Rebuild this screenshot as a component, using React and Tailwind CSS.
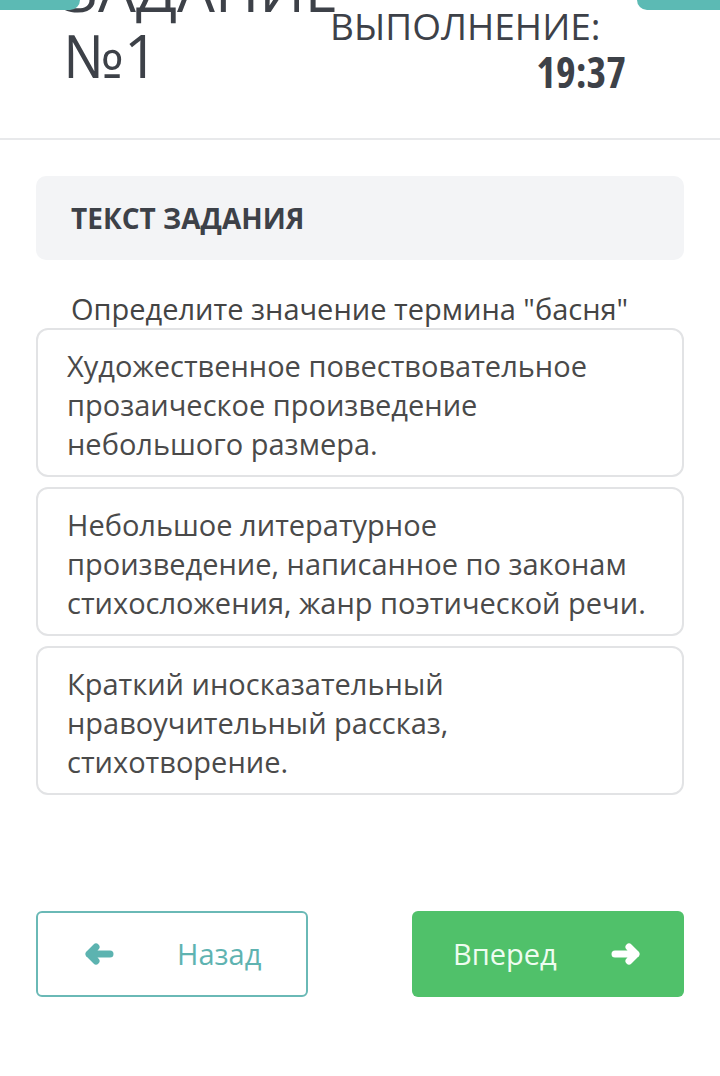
const answers = [
  'Художественное повествовательное прозаическое произведение небольшого размера.',
  'Небольшое литературное произведение, написанное по законам стихосложения, жанр поэтической речи.',
  'Краткий иносказательный нравоучительный рассказ, стихотворение.',
];

const Arrow = ({ dir, className }) => (
  <svg
    width="30"
    height="22"
    viewBox="0 0 30 22"
    fill="none"
    stroke="currentColor"
    strokeWidth="7"
    strokeLinecap="round"
    strokeLinejoin="round"
    className={className}
  >
    {dir === 'left' ? (
      <path d="M26 11H5M12 4L5 11l7 7" />
    ) : (
      <path d="M4 11h21M18 4l7 7-7 7" />
    )}
  </svg>
);

export default function App() {
  return (
    <div className="relative w-[720px] min-h-[1076px] overflow-hidden bg-white font-['Open_Sans',sans-serif] text-[#3d4148]">
      {/* buttons from the row above, scrolled off */}
      <div className="absolute left-0 top-0 z-10 h-[10px] w-[80px] rounded-br-[12px] bg-[#5cbab4]" />
      <div className="absolute right-0 top-0 z-10 h-[10px] w-[83px] rounded-bl-[12px] bg-[#5cbab4]" />

      {/* header */}
      <div className="flex h-[140px] items-start border-b-2 border-[#e8e9eb]">
        <div className="ml-[63px] -mt-[44px] w-[267px] text-[60px] leading-[66px] font-stretch-[92%]">
          <div>ЗАДАНИЕ</div>
          <div>№1</div>
        </div>
        <div className="mt-[3px] flex w-[296px] flex-col">
          <div className="text-[37px] leading-[45px] font-stretch-[94%]">ВЫПОЛНЕНИЕ:</div>
          <div className="self-end text-[42px] font-bold leading-[48px] font-stretch-condensed">19:37</div>
        </div>
      </div>

      {/* task text */}
      <div className="mx-[36px] mt-[36px] flex h-[84px] items-center rounded-[10px] bg-[#f3f4f6] px-[35px]">
        <span className="text-[28px] font-bold">ТЕКСТ ЗАДАНИЯ</span>
      </div>

      <p className="ml-[71px] mt-[30px] text-[29px] leading-[38px] text-[#444]">
        Определите значение термина "басня"
      </p>

      <div className="mx-[36px] flex flex-col gap-[10px]">
        {answers.map((a) => (
          <div
            key={a}
            className="rounded-[12px] border-2 border-[#e2e3e5] pb-[12px] pl-[29px] pr-[32px] pt-[16px] text-[29px] leading-[39px] text-[#4a4a4a]"
          >
            {a}
          </div>
        ))}
      </div>

      {/* nav */}
      <div className="mx-[36px] mt-[116px] flex justify-between">
        <button className="flex h-[86px] w-[272px] items-center rounded-[6px] border-2 border-[#6ab9b6] bg-white pl-[46px]">
          <Arrow dir="left" className="text-[#5cb3b0]" />
          <span className="ml-[63px] text-[29px] text-[#5fb3b1]">Назад</span>
        </button>
        <button className="flex h-[86px] w-[272px] items-center rounded-[6px] bg-[#50c16a] pl-[41px] pr-[43px]">
          <span className="flex-1 text-left text-[29px] text-[#eefcf0]">Вперед</span>
          <Arrow dir="right" className="text-white" />
        </button>
      </div>
    </div>
  );
}
